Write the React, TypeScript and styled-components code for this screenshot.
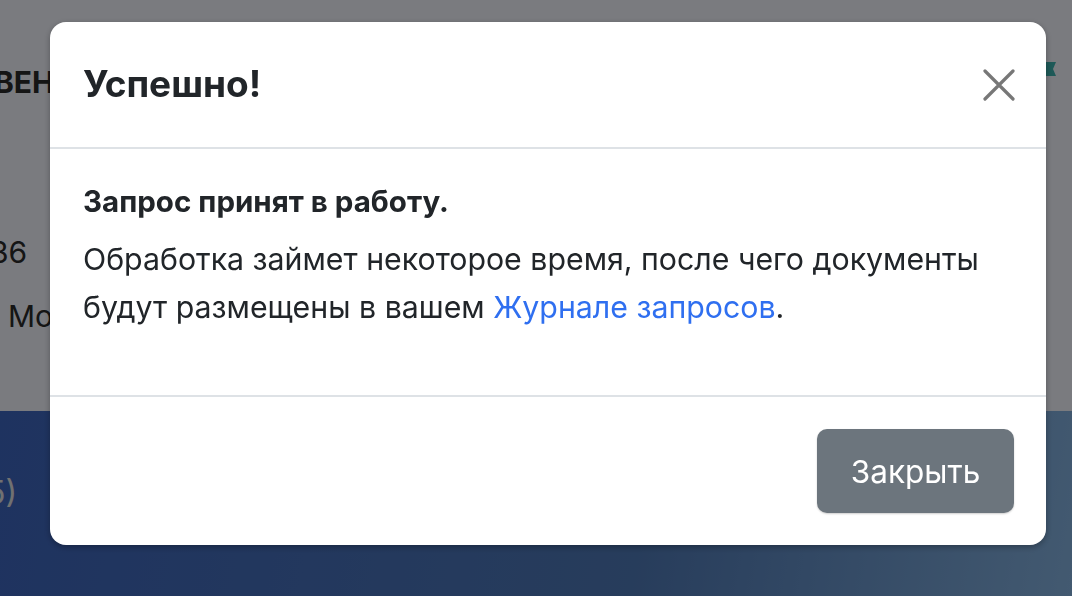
import styled, { createGlobalStyle } from "styled-components";

const GlobalStyle = createGlobalStyle`
    html, body {
        margin: 0;
        padding: 0;
        height: 100%;
        overflow: hidden;
    }
    body {
        font-family: Inter, Roboto, "Noto Sans", sans-serif;
        color: #212529;
    }
`;

export default function App() {
    return (
        <>
            <GlobalStyle />
            <Page>
                <TopArea>
                    <Faded $bold $shift={-6}>ВЕН</Faded>
                    <Faded $shift={-10}>36</Faded>
                    <Faded $shift={8}>Мо</Faded>
                    <Flag />
                </TopArea>
                <BottomBand>
                    <BandText>5)</BandText>
                </BottomBand>
            </Page>
            <Backdrop>
                <Modal role="dialog">
                    <Header>
                        <Title>Успешно!</Title>
                        <CloseButton aria-label="Закрыть">
                            <svg width="32" height="32" viewBox="0 0 32 32">
                                <path d="M2 2 L30 30 M30 2 L2 30" stroke="#777" strokeWidth="3.2" strokeLinecap="round" />
                            </svg>
                        </CloseButton>
                    </Header>
                    <Body>
                        <Lead>Запрос принят в работу.</Lead>
                        <Text>
                            Обработка займет некоторое время, после чего документы будут
                            размещены в вашем <Link href="#">Журнале запросов</Link>.
                        </Text>
                    </Body>
                    <Footer>
                        <SecondaryButton type="button">Закрыть</SecondaryButton>
                    </Footer>
                </Modal>
            </Backdrop>
        </>
    );
}

const Page = styled.div`
    height: 596px;
    display: flex;
    flex-direction: column;
`;

const TopArea = styled.div`
    position: relative;
    height: 411px;
    background: #f4f6fe;
    display: flex;
    flex-direction: column;
    padding-top: 62px;
    box-sizing: border-box;
`;

const Faded = styled.div<{ $bold?: boolean; $shift: number }>`
    font-size: 30px;
    font-weight: ${p => (p.$bold ? 700 : 400)};
    color: #2a2a2a;
    line-height: 40px;
    margin-left: ${p => p.$shift}px;
    margin-bottom: ${p => (p.$bold ? "130px" : "24px")};
`;

const Flag = styled.div`
    position: absolute;
    left: 1046px;
    top: 62px;
    width: 10px;
    height: 14px;
    background: #3db3b0;
    clip-path: polygon(0 0, 100% 0, 70% 50%, 100% 100%, 0 100%);
`;

const BottomBand = styled.div`
    flex: 1;
    background: linear-gradient(100deg, #3d66c0 0%, #4f7ab8 60%, #86b4e2 100%);
    display: flex;
    align-items: center;
    padding-bottom: 22px;
`;

const BandText = styled.span`
    font-size: 32px;
    color: #e2e2e2;
    margin-left: -14px;
`;

const Backdrop = styled.div`
    position: fixed;
    inset: 0;
    background: rgba(0, 0, 0, 0.5);
    display: flex;
    align-items: flex-start;
    padding: 22px 0 0 50px;
`;

const Modal = styled.div`
    width: 996px;
    background: #fff;
    border-radius: 16px;
    box-shadow: 0 2px 6px rgba(0, 0, 0, 0.3);
    display: flex;
    flex-direction: column;
    overflow: hidden;
`;

const Header = styled.div`
    height: 125px;
    padding: 0 31px 0 33px;
    display: flex;
    align-items: center;
    justify-content: space-between;
    border-bottom: 2px solid #dee2e6;
`;

const Title = styled.h5`
    margin: 0;
    font-size: 37px;
    font-weight: 700;
    line-height: 1.2;
    color: #212529;
`;

const CloseButton = styled.button`
    background: none;
    border: none;
    padding: 0;
    width: 32px;
    height: 32px;
    display: flex;
    cursor: pointer;
`;

const Body = styled.div`
    padding: 32px 33px;
`;

const Lead = styled.div`
    font-size: 29.5px;
    font-weight: 700;
    line-height: 40px;
    margin-bottom: 14px;
`;

const Text = styled.p`
    margin: 0 0 32px;
    font-size: 30.3px;
    line-height: 48px;
`;

const Link = styled.a`
    color: #2f6ff0;
    text-decoration: none;
`;

const Footer = styled.div`
    height: 148px;
    border-top: 2px solid #dee2e6;
    display: flex;
    align-items: center;
    justify-content: flex-end;
    padding: 0 32px;
`;

const SecondaryButton = styled.button`
    width: 197px;
    height: 84px;
    border: none;
    border-radius: 10px;
    background: #6c757d;
    color: #fff;
    font-family: Inter, Roboto, "Noto Sans", sans-serif;
    font-size: 31.5px;
    box-shadow: 0 1px 2px rgba(0, 0, 0, 0.2);
    cursor: pointer;
`;
